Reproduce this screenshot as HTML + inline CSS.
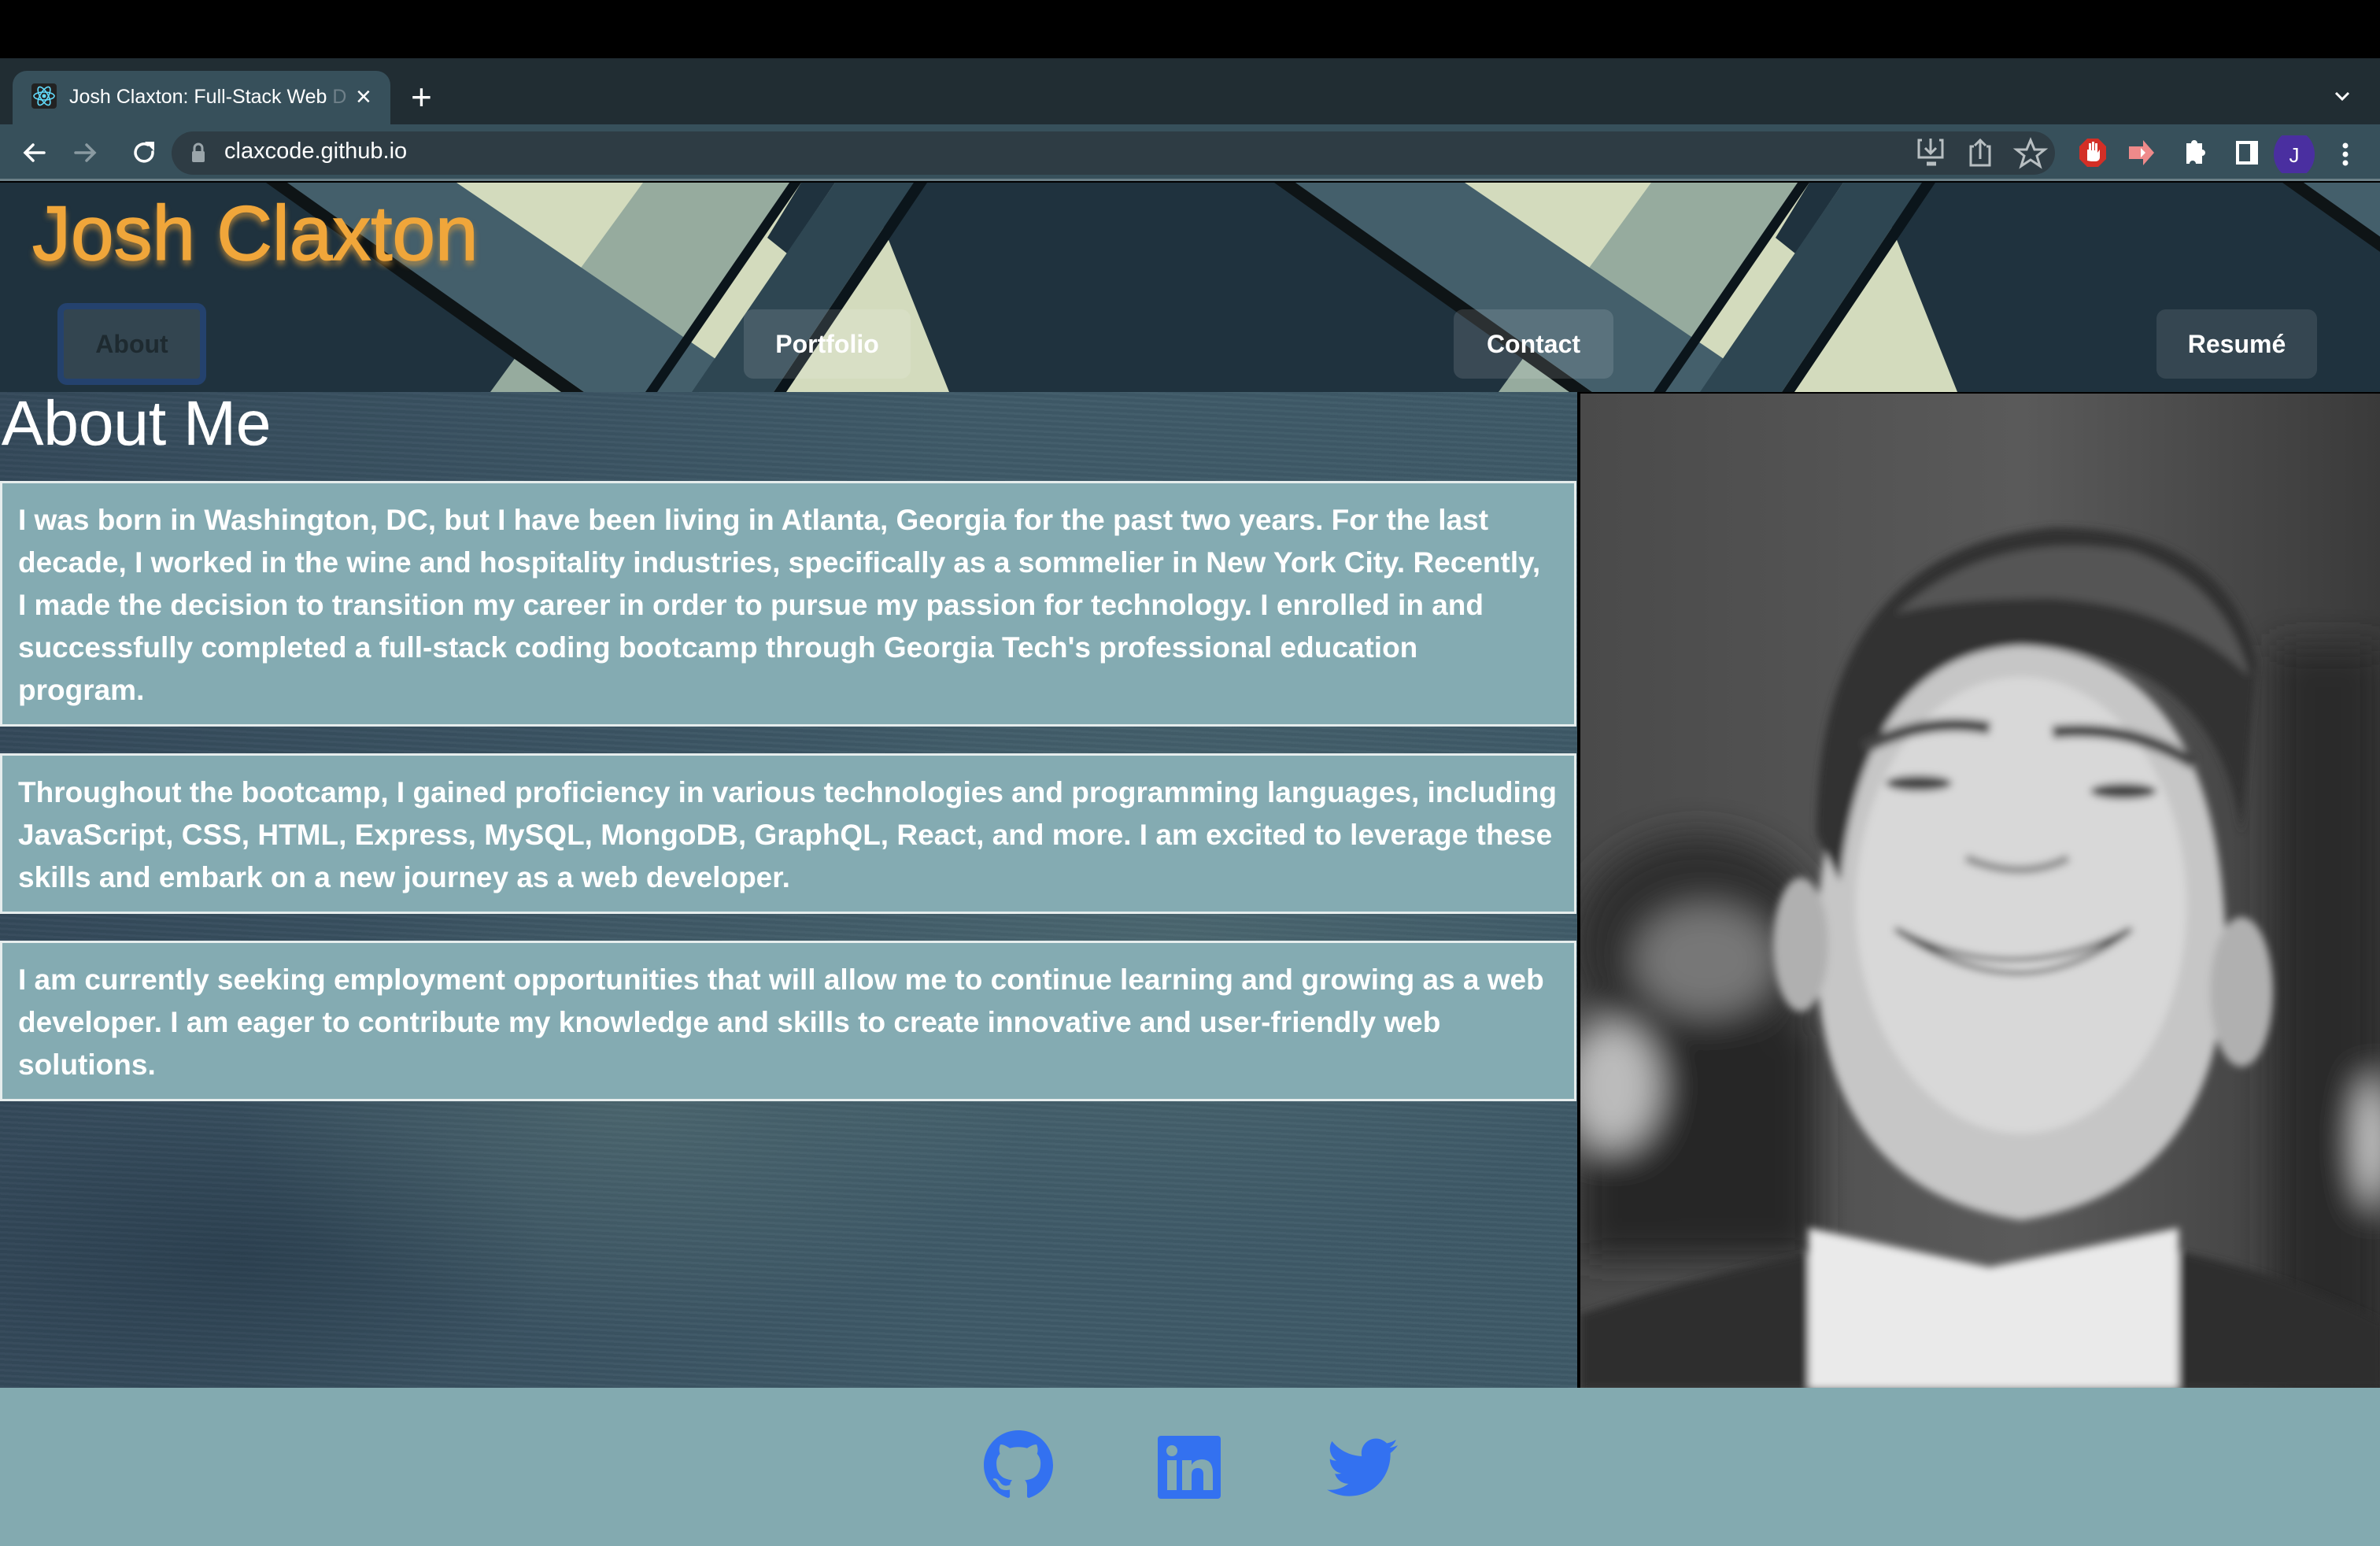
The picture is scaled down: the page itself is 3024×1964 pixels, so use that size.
<!DOCTYPE html>
<html><head><meta charset="utf-8">
<style>
*{margin:0;padding:0;box-sizing:border-box}
html,body{width:3024px;height:1964px;overflow:hidden;background:#000;font-family:"Liberation Sans",sans-serif}
.abs{position:absolute}
#tabstrip{left:0;top:74px;width:3024px;height:84px;background:#212d33}
#tab{left:16px;top:90px;width:480px;height:70px;background:#37505b;border-radius:18px 18px 0 0}
#toolbar{left:0;top:158px;width:3024px;height:72px;background:#37505b;border-bottom:3px solid #6b7f87}
#omni{left:218px;top:167px;width:2393px;height:55px;background:#2e3c44;border-radius:28px}
.ttl{color:#fff;font-size:25px}
#header{left:0;top:232px;width:3024px;height:266px;background:#1f323e;overflow:hidden}
#title{left:41px;top:247px;font-size:98px;color:#f0a63a;-webkit-text-stroke:1.5px #f0a63a;text-shadow:0 6px 8px rgba(240,166,58,.65);white-space:nowrap;line-height:1}
.nav{position:absolute;border-radius:12px;color:#fff;font-weight:bold;font-size:32px;display:flex;align-items:center;justify-content:center}
#content{left:0;top:498px;width:3024px;height:1265px;
background:
radial-gradient(ellipse 500px 300px at 800px 900px,rgba(120,150,140,.25),transparent),
radial-gradient(ellipse 600px 400px at 1500px 700px,rgba(120,150,140,.2),transparent),
radial-gradient(ellipse 400px 200px at 300px 1100px,rgba(20,35,50,.3),transparent),
repeating-linear-gradient(3deg,rgba(255,255,255,0.025) 0 3px,rgba(0,0,0,0.03) 3px 7px),
linear-gradient(90deg,#34495a 0%,#3f5a68 40%,#3e5967 100%)}
h1.am{position:absolute;left:2px;top:498px;font-size:80px;font-weight:normal;color:#fff;line-height:1;-webkit-text-stroke:0.3px #fff}
.box{position:absolute;left:0;width:2003px;background:#84abb2;border:3px solid #e6eded;padding:20px 10px 16px 20px;color:#fff;font-weight:bold;font-size:37px;line-height:54px;letter-spacing:0;white-space:nowrap}
#photo{left:2004px;top:498px;width:1020px;height:1265px;background:#000}
#footer{left:0;top:1763px;width:3024px;height:201px;background:#83aab0}
</style></head><body>
<div class="abs" id="tabstrip"></div>
<div class="abs" id="tab"></div>
<svg class="abs" style="left:40px;top:106px" width="32" height="32" viewBox="0 0 32 32"><rect width="32" height="32" rx="4" fill="#222"/><g fill="none" stroke="#61dafb" stroke-width="1.6"><ellipse cx="16" cy="16" rx="13" ry="5"/><ellipse cx="16" cy="16" rx="13" ry="5" transform="rotate(60 16 16)"/><ellipse cx="16" cy="16" rx="13" ry="5" transform="rotate(120 16 16)"/></g><circle cx="16" cy="16" r="2.5" fill="#61dafb"/></svg>
<div class="abs ttl" style="left:88px;top:109px">Josh Claxton: Full-Stack Web <span style="color:#6f8089">D</span></div>
<div class="abs" style="left:452px;top:104px;color:#fff;font-size:34px">×</div>
<div class="abs" style="left:522px;top:96px;color:#fff;font-size:46px;font-weight:300">+</div>
<svg class="abs" style="left:2962px;top:110px" width="28" height="24" viewBox="0 0 28 24"><path d="M6 8l8 8 8-8" stroke="#fff" stroke-width="3" fill="none"/></svg>
<div class="abs" id="toolbar"></div>
<div class="abs" id="omni"></div>
<svg class="abs" style="left:26px;top:176px" width="200" height="36" viewBox="0 0 200 36"><g stroke-width="3.5" fill="none" stroke-linecap="round"><path d="M30 18H6M16 8L6 18l10 10" stroke="#fff"/><path d="M70 18h24M84 8l10 10-10 10" stroke="#8a9aa1"/><path d="M162 8a11 11 0 1 0 6 9" stroke="#fff"/></g><path d="M158 4h12v12z" fill="#fff"/></svg>
<svg class="abs" style="left:242px;top:180px" width="20" height="28" viewBox="0 0 20 28"><path d="M5 12V8a5 5 0 0 1 10 0v4" stroke="#9aa5aa" stroke-width="3" fill="none"/><rect x="2" y="12" width="16" height="14" rx="2" fill="#9aa5aa"/></svg>
<div class="abs" style="left:285px;top:176px;color:#fff;font-size:29px">claxcode.github.io</div>
<svg class="abs" style="left:2430px;top:172px" width="594" height="48" viewBox="0 0 594 48"><g stroke="#b8bfc2" stroke-width="3" fill="none"><path d="M12 6h-4v22h30V6h-4M23 4v18M16 16l7 7 7-7"/><path d="M18 36h12" stroke-width="5"/><path d="M78 14h-4v24h24V14h-4M86 30V6M79 13l7-7 7 7"/><path d="M150 6l5 12h13l-10 8 4 13-12-8-12 8 4-13-10-8h13z"/></g>
<polygon points="222,4 236,4 246,14 246,30 236,40 222,40 212,30 212,14" fill="#d32f26"/><path d="M222 32v-14h2v-8h3v9h1v-11h3v11h1v-9h3v12l3-4v10a5 5 0 0 1-5 5h-6z" fill="#fff"/>
<path d="M275 14h18v-8l14 16-14 16v-8h-18z" fill="#ef8a8a"/><path d="M290 16v12l6-6z" fill="#fff"/>
<path d="M348 10h6a4 4 0 0 1 8 0h6v8a4 4 0 0 1 0 8v10h-8a4 4 0 0 0-8 0h-4z" fill="#fff"/>
<rect x="413" y="9" width="24" height="26" fill="none" stroke="#fff" stroke-width="4"/><rect x="429" y="9" width="8" height="26" fill="#fff"/>
<ellipse cx="485" cy="24" rx="26" ry="30" fill="#4a2fa0"/><text x="485" y="34" font-size="26" fill="#fff" text-anchor="middle" font-family="Liberation Sans">J</text>
<circle cx="550" cy="13" r="3.5" fill="#fff"/><circle cx="550" cy="24" r="3.5" fill="#fff"/><circle cx="550" cy="35" r="3.5" fill="#fff"/></svg>

<div class="abs" id="header">
<svg width="3024" height="266" viewBox="0 0 3024 266">
<defs><g id="pat">
<polygon points="580,0 1100,0 1206,266 742,266" fill="#d3dbbd"/>
<polygon points="817,0 1003,0 822,266 623,266" fill="#96ab9e"/>
<polygon points="338,0 365,0 742,266 713,266" fill="#0e1416"/>
<polygon points="365,0 580,0 971,266 742,266" fill="#445f6b"/>
<polygon points="1003,0 1018,0 835,266 820,266" fill="#0b151b"/>
<polygon points="1018,0 1061,0 1000,90 975,70" fill="#1f323e"/>
<polygon points="1061,0 1161,0 983,266 879,266" fill="#2e4652"/>
<polygon points="1161,0 1178,0 999,266 983,266" fill="#0b151b"/>
</g></defs>
<use href="#pat"/><use href="#pat" x="1281"/><use href="#pat" x="2562"/>
</svg>
</div>
<div class="abs" id="title">Josh Claxton</div>
<div class="nav" style="left:73px;top:385px;width:189px;height:104px;background:#334550;border:8px solid #24426e;color:#1e2a30">About</div>
<div class="nav" style="left:945px;top:393px;width:212px;height:88px;background:rgba(255,255,255,.12)">Portfolio</div>
<div class="nav" style="left:1847px;top:393px;width:203px;height:88px;background:rgba(255,255,255,.12)">Contact</div>
<div class="nav" style="left:2740px;top:393px;width:204px;height:88px;background:rgba(255,255,255,.1)">Resumé</div>

<div class="abs" id="content"></div>
<h1 class="am">About Me</h1>
<div class="box" style="top:611px">I was born in Washington, DC, but I have been living in Atlanta, Georgia for the past two years. For the last<br>decade, I worked in the wine and hospitality industries, specifically as a sommelier in New York City. Recently,<br>I made the decision to transition my career in order to pursue my passion for technology. I enrolled in and<br>successfully completed a full-stack coding bootcamp through Georgia Tech's professional education<br>program.</div>
<div class="box" style="top:957px">Throughout the bootcamp, I gained proficiency in various technologies and programming languages, including<br>JavaScript, CSS, HTML, Express, MySQL, MongoDB, GraphQL, React, and more. I am excited to leverage these<br>skills and embark on a new journey as a web developer.</div>
<div class="box" style="top:1195px">I am currently seeking employment opportunities that will allow me to continue learning and growing as a web<br>developer. I am eager to contribute my knowledge and skills to create innovative and user-friendly web<br>solutions.</div>

<div class="abs" id="photo">
<svg width="1020" height="1265" viewBox="0 0 1020 1265" style="position:absolute;left:4px;top:2px">
<defs><filter id="b" x="-20%" y="-20%" width="140%" height="140%"><feGaussianBlur stdDeviation="22"/></filter><filter id="b2"><feGaussianBlur stdDeviation="5"/></filter>
<linearGradient id="bg" x1="0" y1="0" x2="1" y2="0"><stop offset="0" stop-color="#4a4a4a"/><stop offset=".55" stop-color="#5a5a5a"/><stop offset="1" stop-color="#3a3a3a"/></linearGradient></defs>
<rect width="1020" height="1265" fill="url(#bg)"/>
<g filter="url(#b)">
<ellipse cx="150" cy="700" rx="160" ry="140" fill="#2e2e2e"/>
<ellipse cx="160" cy="720" rx="90" ry="70" fill="#777"/>
<rect x="0" y="800" width="300" height="300" fill="#282828"/>
<ellipse cx="40" cy="880" rx="60" ry="80" fill="#bbb"/>
<rect x="880" y="320" width="140" height="945" fill="#2c2c2c"/>
<ellipse cx="1010" cy="950" rx="20" ry="80" fill="#ddd"/>
</g>
<g filter="url(#b2)">
<path d="M0 1265V1170Q150 1120 300 1090L420 1265Z" fill="#2f2f2f"/>
<path d="M1020 1265V1180Q900 1120 760 1090L700 1265Z" fill="#2f2f2f"/>
<path d="M290 1060L520 1110L760 1060L760 1265H290Z" fill="#eaeaea"/>
<path d="M300 700Q310 330 560 320Q810 330 820 700Q820 1010 560 1050Q300 1010 300 700Z" fill="#c6c6c6"/>
<ellipse cx="560" cy="650" rx="210" ry="290" fill="#d8d8d8"/>
<ellipse cx="280" cy="700" rx="35" ry="85" fill="#b0b0b0"/>
<ellipse cx="840" cy="760" rx="40" ry="95" fill="#b0b0b0"/>
<path d="M300 560Q300 200 600 170Q820 170 860 340L840 560Q810 330 560 320Q360 330 330 620Z" fill="#333"/>
<path d="M400 280Q520 170 700 200Q820 240 850 360Q760 270 600 260Q470 260 400 280Z" fill="#555"/>
<path d="M360 450Q440 410 520 425M600 430Q700 420 780 470" stroke="#444" stroke-width="16" fill="none"/>
<ellipse cx="430" cy="495" rx="42" ry="10" fill="#444"/><ellipse cx="690" cy="505" rx="42" ry="10" fill="#444"/>
<path d="M400 680Q550 760 700 680Q560 790 400 680Z" fill="#f4f4f4" stroke="#333" stroke-width="6"/>
<path d="M490 590Q560 620 620 590" stroke="#888" stroke-width="10" fill="none"/>
</g>
</svg>
</div>

<div class="abs" id="footer"></div>
<svg class="abs" style="left:1248px;top:1817px" width="92" height="88" viewBox="0 0 16 16"><path fill="#3371f0" d="M8 0C3.58 0 0 3.58 0 8c0 3.540 2.29 6.530 5.47 7.59.4.07.55-.17.55-.38 0-.19-.01-.82-.01-1.49-2.01.37-2.53-.49-2.69-.94-.09-.23-.48-.94-.82-1.13-.28-.15-.68-.52-.01-.53.63-.01 1.08.58 1.23.82.72 1.21 1.87.87 2.33.66.07-.52.28-.87.51-1.07-1.78-.2-3.64-.89-3.64-3.95 0-.87.31-1.59.82-2.15-.08-.2-.36-1.02.08-2.12 0 0 .67-.21 2.2.82.64-.18 1.32-.27 2-.27.68 0 1.36.09 2 .27 1.53-1.04 2.2-.82 2.2-.82.44 1.1.16 1.92.08 2.12.51.56.82 1.27.82 2.15 0 3.070-1.87 3.75-3.65 3.95.29.25.54.73.54 1.48 0 1.07-.01 1.93-.01 2.2 0 .21.15.46.55.38A8.013 8.013 0 0016 8c0-4.42-3.58-8-8-8z"/></svg>
<svg class="abs" style="left:1471px;top:1824px" width="80" height="80" viewBox="0 0 80 80"><rect width="80" height="80" rx="4" fill="#3371f0"/><rect x="12" y="31" width="12" height="38" fill="#83aab0"/><circle cx="18" cy="19" r="7" fill="#83aab0"/><path d="M31 31h12v6q4-7 13-7q14 0 14 17v22h-12v-20q0-8-7-8q-8 0-8 9v19h-12z" fill="#83aab0"/></svg>
<svg class="abs" style="left:1686px;top:1827px" width="90" height="74" viewBox="0 0 24 19.5"><path fill="#3371f0" d="M24 2.3c-.9.4-1.8.7-2.8.8 1-.6 1.8-1.6 2.2-2.7-1 .6-2 1-3.1 1.2C19.3.6 18 0 16.6 0c-2.7 0-4.9 2.2-4.9 4.9 0 .4 0 .8.1 1.1C7.7 5.8 4.1 3.9 1.7.9c-.4.7-.7 1.6-.7 2.5 0 1.7.9 3.2 2.2 4.1-.8 0-1.6-.2-2.2-.6v.1c0 2.4 1.7 4.4 3.9 4.8-.4.1-.8.2-1.3.2-.3 0-.6 0-.9-.1.6 2 2.4 3.4 4.6 3.4-1.7 1.3-3.8 2.1-6.1 2.1-.4 0-.8 0-1.2-.1 2.2 1.4 4.8 2.2 7.5 2.2 9.1 0 14-7.5 14-14v-.6c1-.7 1.8-1.6 2.5-2.6z"/></svg>
</body></html>
